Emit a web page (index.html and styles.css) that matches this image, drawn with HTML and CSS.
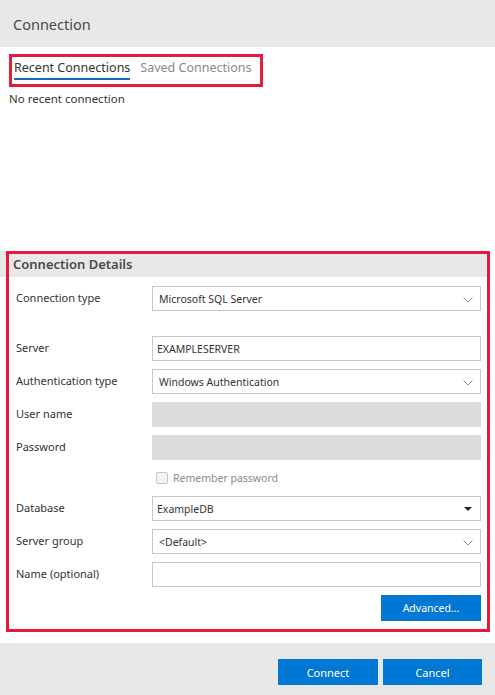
FILE: index.html
```html
<!DOCTYPE html>
<html>
<head>
<meta charset="utf-8">
<link rel="stylesheet" href="styles.css">
</head>
<body>
<div class="dialog">
  <div class="title">Connection</div>
  <div class="recent">
    <div class="tabs">
      <div class="tab active">Recent Connections</div>
      <div class="tab">Saved Connections</div>
    </div>
    <div class="empty">No recent connection</div>
  </div>
  <div class="details">
    <div class="details-head">Connection Details</div>
    <div class="form">
      <div class="row first">
        <div class="label">Connection type</div>
        <div class="field select">Microsoft SQL Server<svg class="chev" viewBox="0 0 10 6"><path d="M0.5 0.5 L5 5 L9.5 0.5" fill="none" stroke="#8a8a8a" stroke-width="1"/></svg></div>
      </div>
      <div class="row">
        <div class="label">Server</div>
        <div class="field text">EXAMPLESERVER</div>
      </div>
      <div class="row">
        <div class="label">Authentication type</div>
        <div class="field select">Windows Authentication<svg class="chev" viewBox="0 0 10 6"><path d="M0.5 0.5 L5 5 L9.5 0.5" fill="none" stroke="#8a8a8a" stroke-width="1"/></svg></div>
      </div>
      <div class="row">
        <div class="label">User name</div>
        <div class="field disabled"></div>
      </div>
      <div class="row">
        <div class="label">Password</div>
        <div class="field disabled"></div>
      </div>
      <div class="row check">
        <div class="label"></div>
        <div class="check-row"><span class="checkbox"></span><span class="check-text">Remember password</span></div>
      </div>
      <div class="row">
        <div class="label">Database</div>
        <div class="field text">ExampleDB<svg class="tri" viewBox="0 0 8 4"><path d="M0 0 L8 0 L4 4 Z" fill="#222"/></svg></div>
      </div>
      <div class="row">
        <div class="label">Server group</div>
        <div class="field select">&lt;Default&gt;<svg class="chev" viewBox="0 0 10 6"><path d="M0.5 0.5 L5 5 L9.5 0.5" fill="none" stroke="#8a8a8a" stroke-width="1"/></svg></div>
      </div>
      <div class="row">
        <div class="label">Name (optional)</div>
        <div class="field text"></div>
      </div>
      <div class="row adv-row">
        <button class="btn adv">Advanced...</button>
      </div>
    </div>
    <div class="highlight"></div>
  </div>
  <div class="footer">
    <button class="btn">Connect</button>
    <button class="btn cancel">Cancel</button>
  </div>
</div>
</body>
</html>
```
FILE: styles.css
```css
* { box-sizing: border-box; }
html, body { margin: 0; padding: 0; background: #fff; }
body {
  font-family: "Noto Sans", "Open Sans", sans-serif;
  color: #333;
  width: 495px;
  height: 695px;
  overflow: hidden;
}
.dialog {
  display: flex;
  flex-direction: column;
  height: 695px;
}
.title {
  height: 47px;
  background: #e8e8e8;
  display: flex;
  align-items: center;
  padding-left: 13px;
  font-size: 14.5px;
  color: #4a4a4a;
  padding-top: 1px;
}
.recent {
  height: 204px;
  padding: 7px 0 0 9px;
}
.tabs {
  width: 254px;
  height: 33px;
  border: 3px solid #e81a3b;
  display: flex;
  align-items: flex-start;
  padding: 0 0 0 2px;
}
.tab {
  font-size: 12.5px;
  color: #8a8a8a;
  margin-right: 10px;
  height: 23px;
  line-height: 20px;
  padding-top: 1px;
  white-space: nowrap;
  flex-shrink: 0;
}
.tab.active {
  color: #333;
  border-bottom: 2px solid #0f6cbd;
}
.empty {
  font-size: 11.5px;
  color: #333;
  margin-top: 2px;
  line-height: 20px;
}
.details {
  position: relative;
  height: 392px;
}
.details-head {
  width: 488px;
  height: 26px;
  background: #e8e8e8;
  padding-left: 13px;
  font-size: 13px;
  font-weight: 600;
  color: #4a4a4a;
  line-height: 26px;
}
.form {
  display: flex;
  flex-direction: column;
  padding: 9px 0 0 16px;
}
.row {
  display: flex;
  align-items: center;
  height: 25px;
  margin-bottom: 8px;
}
.row.first { margin-bottom: 25px; }
.row.check { height: 20px; }
.label {
  width: 136px;
  flex-shrink: 0;
  font-size: 11px;
  color: #333;
  padding-bottom: 2px;
}
.field {
  width: 329px;
  height: 25px;
  border: 1px solid #c8c8c8;
  font-size: 10.5px;
  color: #333;
  display: flex;
  align-items: center;
  padding-left: 6px;
  position: relative;
}
.field.text { padding-left: 4px; }
.field.disabled {
  background: #dcdcdc;
  border: none;
}
.chev {
  position: absolute;
  right: 7px;
  top: 10px;
  width: 10px;
  height: 6px;
}
.tri {
  position: absolute;
  right: 8px;
  top: 10px;
  width: 8px;
  height: 4px;
}
.check-row {
  display: flex;
  align-items: center;
  padding-left: 4px;
}
.checkbox {
  width: 12px;
  height: 12px;
  border: 1px solid #c6c6c6;
  border-radius: 2px;
  background: #f2f2f2;
  margin-right: 5px;
}
.check-text {
  font-size: 10.5px;
  color: #8a8a8a;
}
.adv-row {
  justify-content: flex-end;
  width: 465px;
  height: 26px;
}
.btn {
  font-family: inherit;
  background: #0078d4;
  color: #fff;
  border: none;
  font-size: 11px;
  height: 26px;
  width: 100px;
  padding: 0;
  cursor: default;
}
.adv { font-size: 10.5px; }
.highlight {
  position: absolute;
  left: 6px;
  top: 0;
  width: 484px;
  height: 381px;
  border: 3px solid #e81a3b;
  pointer-events: none;
}
.footer {
  height: 52px;
  background: #e8e8e8;
  display: flex;
  justify-content: flex-end;
  align-items: flex-start;
  padding: 16px 13px 0 0;
  gap: 5px;
}
.footer .cancel { width: 99px; }
```
